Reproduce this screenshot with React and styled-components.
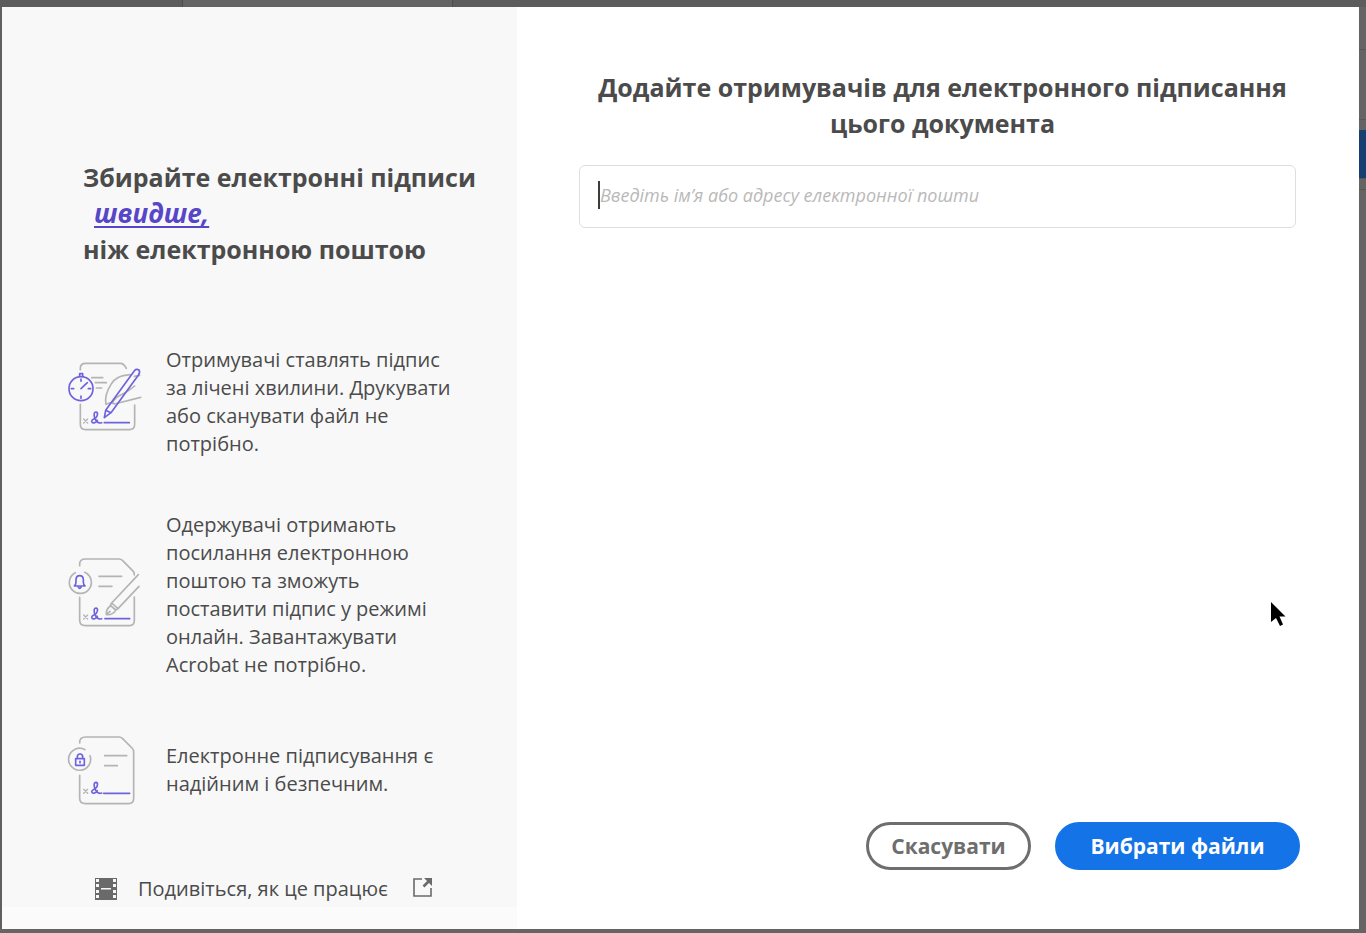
import React from "react";
import styled, { createGlobalStyle } from "styled-components";

const GlobalStyle = createGlobalStyle`
  *, *::before, *::after { box-sizing: border-box; }
  body {
    margin: 0;
    background: #656565;
    color: #4b4b4b;
    font-family: "Open Sans", "Noto Sans", sans-serif;
  }
  h1, h2, p, ul { margin: 0; padding: 0; }
`;

const Screen = styled.div`
  min-height: 100vh;
  display: flex;
  flex-direction: column;
  background: #656565;
`;

const TabStrip = styled.div`
  height: 7px;
  display: flex;
  background: #5c5c5c;
`;

const TabEdge = styled.div`
  width: ${(p) => p.$width}px;
  background: ${(p) => (p.$active ? "#646464" : "#5c5c5c")};
  border-right: 1px solid #4c4c4c;
`;

const Middle = styled.div`
  flex: 1;
  display: flex;
`;

const LeftEdge = styled.div`
  width: 2px;
  background: #606060;
`;

const RightEdge = styled.div`
  width: 7px;
  padding-top: 42px;
  background: #646464;
`;

const EdgeBand = styled.div`
  height: ${(p) => p.$height}px;
  background: ${(p) => (p.$blue ? "#173f72" : "#646464")};
  border-top: 1px solid ${(p) => (p.$blue ? "#173f72" : "#575757")};
`;

const BottomEdge = styled.div`
  height: 4px;
`;

const Dialog = styled.main`
  flex: 1;
  min-width: 0;
  display: flex;
  background: #ffffff;
`;

const Aside = styled.aside`
  flex: 0 0 515px;
  display: flex;
  flex-direction: column;
  padding: 152px 0 0 65px;
  background: #f8f8f8;
  border-bottom: 22px solid #fbfbfb;
`;

const Title = styled.h2`
  padding-left: 16px;
  font-size: 25px;
  line-height: 36px;
  font-weight: 700;
  white-space: nowrap;
`;

const Emphasis = styled.em`
  display: block;
  padding-left: 11px;
  font-size: 26px;
  color: #5746c8;
  text-decoration: underline;
  text-decoration-thickness: 2px;
  text-underline-offset: 3px;
  text-decoration-skip-ink: auto;
`;

const Benefits = styled.ul`
  display: flex;
  flex-direction: column;
  gap: 53px;
  margin-top: 79px;
  list-style: none;
`;

const Benefit = styled.li`
  display: flex;
  align-items: center;
  gap: 25px;
`;

const BenefitText = styled.p`
  width: 285px;
  font-size: 20px;
  line-height: 28px;
`;

const BenefitArt = styled.svg`
  flex: none;
  width: 74px;
  height: 76px;
  overflow: visible;
  fill: none;
  stroke: #b4b4b4;
  stroke-width: 5;
  stroke-linecap: round;
  stroke-linejoin: round;

  .accent { stroke: #6f62dd; }
`;

const WatchLink = styled.a`
  display: flex;
  align-items: center;
  margin: 67px 0 4px 28px;
  color: inherit;
  font-size: 20px;
  line-height: 28px;
  text-decoration: none;
  white-space: nowrap;
`;

const WatchLabel = styled.span`
  width: 248px;
  margin: 0 27px 0 21px;
`;

const Content = styled.section`
  flex: 1;
  min-width: 0;
  display: flex;
  flex-direction: column;
  padding: 62px 59px 59px 62px;
`;

const Heading = styled.h1`
  padding-left: 6px;
  font-size: 25px;
  line-height: 36px;
  font-weight: 700;
  text-align: center;
`;

const Field = styled.label`
  display: flex;
  align-items: center;
  height: 63px;
  margin: 24px 4px 0 0;
  padding: 0 18px 4px;
  border: 1px solid #dedede;
  border-radius: 6px;
`;

const Caret = styled.span`
  width: 2px;
  height: 28px;
  background: #3c3c3c;
`;

const RecipientInput = styled.input`
  flex: 1;
  min-width: 0;
  padding: 0;
  border: 0;
  outline: 0;
  background: transparent;
  color: #4b4b4b;
  font: 18px/28px "Open Sans", "Noto Sans", sans-serif;

  &::placeholder {
    color: #b9b9b9;
    font-style: italic;
    opacity: 1;
  }
`;

const Actions = styled.div`
  display: flex;
  justify-content: flex-end;
  gap: 24px;
  margin-top: auto;
`;

const Button = styled.button`
  width: ${(p) => (p.$primary ? 245 : 165)}px;
  height: 48px;
  padding: 0;
  border: 3px solid ${(p) => (p.$primary ? "#1473e6" : "#6e6e6e")};
  border-radius: 24px;
  background: ${(p) => (p.$primary ? "#1473e6" : "#ffffff")};
  color: ${(p) => (p.$primary ? "#ffffff" : "#6e6e6e")};
  font: 700 21px/30px "Open Sans", "Noto Sans", sans-serif;
`;

const Pointer = styled.svg`
  position: absolute;
  left: 1270px;
  top: 601px;
  width: 17px;
  height: 27px;
  pointer-events: none;
`;

function Signature() {
  return (
    <>
      <path strokeWidth="4" d="M71 207l12 12M83 207l-12 12" />
      <path
        className="accent"
        d="M125 218C114 222 107 211 104 203C101 193 102 186 108 186C115 187 113 197 108 203C103 208 95 208 95 214C97 222 107 219 112 211"
      />
    </>
  );
}

function StopwatchArt() {
  return (
    <BenefitArt viewBox="21 42 222 228" aria-hidden="true">
      <path d="M61 59V54Q61 40 77 40H182Q191 40 199 55M61 163V223Q61 239 77 239H208Q224 239 224 223V165" />
      <path d="M95 83H128M106 98H139M109 114H125" />
      <path d="M138 163C134 144 141 122 153 103C164 84 180 77 211 74M138 163L156 157L163 162L242 142M158 160C163 144 174 139 187 133C202 125 215 116 224 108M223 79L239 76" />
      <g className="accent">
        <circle cx="63" cy="116" r="36" />
        <path d="M59 79V71H68V79M63 116L82 98M63 87V94M63 138V145M34 116H41M85 116H92" />
        <path d="M133 203L137 181L221 65Q228 54 237 60Q241 65 236 74L153 188ZM137 181L153 188M133 218H208" />
      </g>
      <Signature />
    </BenefitArt>
  );
}

function BellArt() {
  return (
    <BenefitArt viewBox="21 21 222 228" aria-hidden="true">
      <g>
        <path d="M59 47V42Q59 27 77 27H177Q183 27 188 32L220 64Q223 68 223 75M59 142V211Q59 227 77 227H208Q223 227 223 211V141" />
        <path d="M46 68A33 33 0 1 0 74 67" />
        <path d="M117 79H185M117 109H156M235 74L155 159L174 176L237 109M155 159L151 166L167 180L174 176M151 168Q138 176 139 194Q158 196 167 181M139 194L150 184" />
      </g>
      <g className="accent">
        <path d="M43 108Q48 104 48 96V88Q49 77 59 77Q69 77 70 88V96Q70 104 75 108ZM55 112Q59 118 63 112M135 206H209" />
      </g>
      <g transform="translate(0 -12)">
        <Signature />
      </g>
    </BenefitArt>
  );
}

function LockArt() {
  return (
    <BenefitArt viewBox="21 6 222 228" aria-hidden="true">
      <path d="M59 39V37Q59 21 77 21H177Q183 21 188 26L216 54Q221 59 221 66V205Q221 221 205 221H77Q59 221 59 205V136" />
      <path d="M75 59A33 33 0 1 0 90 77" />
      <path d="M134 77H200M134 107H172" />
      <path className="accent" d="M47 86H73V106H47ZM52 86V80Q52 72 60 72Q68 72 68 80V86M60 94V98M131 190H209" />
      <g transform="translate(0 -29)">
        <Signature />
      </g>
    </BenefitArt>
  );
}

function FilmIcon() {
  const holes = [1, 6, 12, 17];
  return (
    <svg width="22" height="22" viewBox="0 0 22 22" aria-hidden="true">
      <path fill="#6a6a6a" d="M0 0H22V22H0Z" />
      <path fill="#f8f8f8" d="M6 10H16V11.500H6Z" />
      {holes.map((y) => (
        <path key={y} fill="#f8f8f8" d={`M1 ${y}h3v3h-3zM18 ${y}h3v3h-3z`} />
      ))}
    </svg>
  );
}

function ExternalIcon() {
  return (
    <svg width="20" height="22" viewBox="0 0 20 22" aria-hidden="true">
      <path d="M9 1H1V18H18V10" fill="none" stroke="#6a6a6a" strokeWidth="1.6" />
      <path d="M10.500 8.500L16 3" stroke="#6a6a6a" strokeWidth="2.600" />
      <path d="M11 0H19V8Z" fill="#6a6a6a" />
    </svg>
  );
}

const benefits = [
  {
    Art: StopwatchArt,
    text: "Отримувачі ставлять підпис за лічені хвилини. Друкувати або сканувати файл не потрібно.",
  },
  {
    Art: BellArt,
    text: "Одержувачі отримають посилання електронною поштою та зможуть поставити підпис у режимі онлайн. Завантажувати Acrobat не потрібно.",
  },
  { Art: LockArt, text: "Електронне підписування є надійним і безпечним." },
];

export default function App() {
  return (
    <Screen>
      <GlobalStyle />
      <TabStrip>
        <TabEdge $width={183} />
        <TabEdge $width={270} $active />
      </TabStrip>
      <Middle>
        <LeftEdge />
        <Dialog>
          <Aside>
            <Title>
              Збирайте електронні підписи
              <Emphasis>швидше,</Emphasis>
              ніж електронною поштою
            </Title>
            <Benefits>
              {benefits.map(({ Art, text }) => (
                <Benefit key={text}>
                  <Art />
                  <BenefitText>{text}</BenefitText>
                </Benefit>
              ))}
            </Benefits>
            <WatchLink href="#video">
              <FilmIcon />
              <WatchLabel>Подивіться, як це працює</WatchLabel>
              <ExternalIcon />
            </WatchLink>
          </Aside>
          <Content>
            <Heading>Додайте отримувачів для електронного підписання цього документа</Heading>
            <Field>
              <Caret />
              <RecipientInput
                type="text"
                aria-label="Отримувачі"
                placeholder="Введіть ім’я або адресу електронної пошти"
              />
            </Field>
            <Actions>
              <Button type="button">Скасувати</Button>
              <Button type="button" $primary>
                Вибрати файли
              </Button>
            </Actions>
          </Content>
        </Dialog>
        <RightEdge>
          <EdgeBand $height={70} />
          <EdgeBand $height={11} />
          <EdgeBand $height={48} $blue />
          <EdgeBand $height={11} />
          <EdgeBand $height={1} />
        </RightEdge>
      </Middle>
      <BottomEdge />
      <Pointer viewBox="0 0 17 27" aria-hidden="true">
        <path d="M1 1V21L6 17L10 25L13 23.500L9.500 15.500H15.500Z" fill="#000000" />
      </Pointer>
    </Screen>
  );
}
